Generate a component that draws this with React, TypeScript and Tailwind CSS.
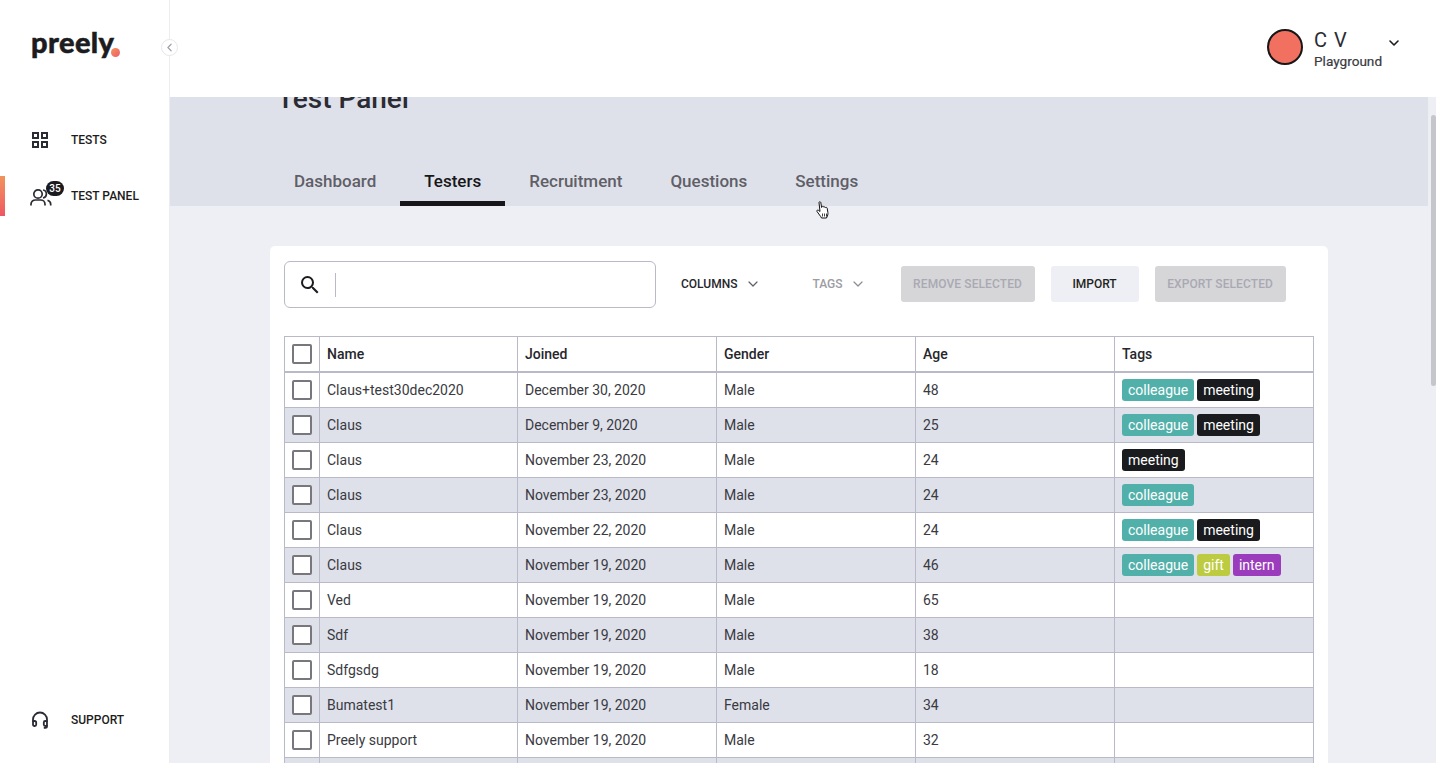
import { ChevronDown, ChevronLeft } from "lucide-react";

type Tag = "colleague" | "meeting" | "gift" | "intern";

const tagClass: Record<Tag, string> = {
  colleague: "bg-[#52b0aa]",
  meeting: "bg-[#1a1b1e]",
  gift: "bg-[#bccb3f]",
  intern: "bg-[#9b3cbd]",
};

const rows: { name: string; joined: string; gender: string; age: string; tags: Tag[] }[] = [
  { name: "Claus+test30dec2020", joined: "December 30, 2020", gender: "Male", age: "48", tags: ["colleague", "meeting"] },
  { name: "Claus", joined: "December 9, 2020", gender: "Male", age: "25", tags: ["colleague", "meeting"] },
  { name: "Claus", joined: "November 23, 2020", gender: "Male", age: "24", tags: ["meeting"] },
  { name: "Claus", joined: "November 23, 2020", gender: "Male", age: "24", tags: ["colleague"] },
  { name: "Claus", joined: "November 22, 2020", gender: "Male", age: "24", tags: ["colleague", "meeting"] },
  { name: "Claus", joined: "November 19, 2020", gender: "Male", age: "46", tags: ["colleague", "gift", "intern"] },
  { name: "Ved", joined: "November 19, 2020", gender: "Male", age: "65", tags: [] },
  { name: "Sdf", joined: "November 19, 2020", gender: "Male", age: "38", tags: [] },
  { name: "Sdfgsdg", joined: "November 19, 2020", gender: "Male", age: "18", tags: [] },
  { name: "Bumatest1", joined: "November 19, 2020", gender: "Female", age: "34", tags: [] },
  { name: "Preely support", joined: "November 19, 2020", gender: "Male", age: "32", tags: [] },
  { name: "", joined: "", gender: "", age: "", tags: [] },
];

function Box() {
  return <span className="block w-5 h-5 rounded-[2px] border-2 border-[#77777d] bg-white" />;
}

function Cell({ className, children }: { className: string; children?: React.ReactNode }) {
  return (
    <div className={`${className} flex items-center shrink-0 border-r border-[#b9b9c7] pl-[7px] h-full`}>{children}</div>
  );
}

function NavItem({ icon, label }: { icon: React.ReactNode; label: string }) {
  return (
    <div className="flex items-center h-10 pl-[30px]">
      <span className="relative w-[41px] h-6 flex items-center">{icon}</span>
      <span className="text-[12px] font-medium text-[#1c1c20] leading-none">{label}</span>
    </div>
  );
}

export default function App() {
  return (
    <div className="relative flex w-[1436px] h-[763px] overflow-hidden bg-[#eeeff4] text-[#2b2b33] font-['Roboto',sans-serif]">
      {/* Sidebar */}
      <aside className="relative flex flex-col shrink-0 w-[170px] h-full bg-white border-r border-[#ecedf1]">
        <div className="h-[120px] pl-[31px] pt-[22px]">
          <div className="flex items-end h-[40px]">
            <span className="font-['Lato',sans-serif] font-black text-[29px] leading-[40px] tracking-[0.4px] text-[#1b1b20] [-webkit-text-stroke:0.5px_#1b1b20]">preely</span>
            <span className="block w-[9px] h-[9px] rounded-full mb-[5px] -ml-[3px] bg-gradient-to-br from-[#f2935a] to-[#ee5a66]" />
          </div>
        </div>
        <div className="flex flex-col gap-4">
          <NavItem
            label="TESTS"
            icon={
              <svg width="16" height="16" viewBox="0 0 16 16" fill="none" stroke="#2b2b33" strokeWidth="2" className="ml-[2px]">
                <rect x="1" y="1" width="5" height="5" />
                <rect x="10" y="1" width="5" height="5" />
                <rect x="1" y="10" width="5" height="5" />
                <rect x="10" y="10" width="5" height="5" />
              </svg>
            }
          />
          <div className="relative">
            <span className="absolute left-0 top-0 w-[5px] h-10 bg-gradient-to-b from-[#f1935c] to-[#ee5561]" />
            <NavItem
              label="TEST PANEL"
              icon={
                <>
                  <svg width="22" height="20" viewBox="0 0 22 20" fill="none" stroke="#2b2b33" strokeWidth="1.7" className="mt-[1px]">
                    <circle cx="8" cy="7" r="4.2" />
                    <path d="M1 18.5v-1.2c0-2.6 2-4.3 4.4-4.3h5.2c2.4 0 4.4 1.700 4.4 4.3v1.2" />
                    <path d="M13 3c2 .3 3.4 2 3.4 4s-1.4 3.6-3.4 4" />
                    <path d="M17.500 13.300c1.900.5 3.200 2 3.200 4v1.200" />
                  </svg>
                  <span className="absolute left-[16px] -top-[3px] flex items-center justify-center w-[18px] h-[15px] rounded-full bg-[#1a1b1e] text-white text-[10px] font-medium leading-none">35</span>
                </>
              }
            />
          </div>
        </div>
        <div className="mt-auto mb-[23px]">
          <NavItem
            label="SUPPORT"
            icon={
              <svg width="18" height="18" viewBox="0 0 18 18" fill="none" stroke="#2b2b33" strokeWidth="1.8" className="ml-[1px]">
                <path d="M2 11V8.500a7 7 0 0 1 14 0V11" />
                <rect x="2" y="10" width="3.200" height="5" rx="1.400" />
                <rect x="12.800" y="10" width="3.200" height="5" rx="1.400" />
                <path d="M16 14v1.200c0 1-.8 1.600-1.800 1.600h-1.400" />
              </svg>
            }
          />
        </div>
        <span className="absolute left-[161px] top-[39px] flex items-center justify-center w-[17px] h-[17px] rounded-full bg-white border border-[#e6e7ec]">
          <ChevronLeft size={13} strokeWidth={2.2} color="#a0a1a9" />
        </span>
      </aside>

      <div className="flex flex-col flex-1 min-w-0">
        {/* Top bar */}
        <header className="flex items-center justify-end shrink-0 h-[97px] bg-white pr-[34px]">
          <span className="block w-9 h-9 mb-[4px] rounded-full bg-[#f1705f] border-2 border-[#17171a]" />
          <div className="ml-[11px] w-[72px] flex flex-col">
            <span className="text-[20px] leading-[24px] tracking-[1px] text-[#2b2b33]">C V</span>
            <span className="text-[13.6px] leading-[18px] text-[#3a3a42] [-webkit-text-stroke:0.2px_#3a3a42]">Playground</span>
          </div>
          <ChevronDown size={16} strokeWidth={2.4} color="#1b1b20" className="mb-[12px]" />
        </header>

        <div className="flex flex-1 min-h-0">
          <main className="flex-1 min-w-0 overflow-hidden">
            {/* Band */}
            <div className="h-[109px] bg-[#dfe1ea] overflow-hidden flex flex-col pl-[100px]">
              <h1 className="text-[28px] leading-[32px] -mt-[14px] font-medium text-[#2b2b33] ml-[7px]">Test Panel</h1>
              <nav className="mt-auto flex h-[45px] text-[17px] font-medium text-[#5f5f67]">
                <span className="px-6 pt-2">Dashboard</span>
                <span className="px-6 pt-2 text-[#17171a] border-b-[5px] border-[#17171a]">Testers</span>
                <span className="px-6 pt-2">Recruitment</span>
                <span className="px-6 pt-2">Questions</span>
                <span className="px-6 pt-2">Settings</span>
              </nav>
            </div>

            {/* Card */}
            <div className="pl-[100px] pt-10">
              <section className="w-[1058px] bg-white rounded-[5px] px-[14px] pt-[15px]">
                <div className="flex items-center h-[47px] text-[12px] font-medium">
                  <div className="flex items-center w-[372px] h-[47px] rounded-[6px] border border-[#b9b9c7] bg-white pl-[13px]">
                    <svg width="24" height="24" viewBox="0 0 24 24" fill="#1b1b20">
                      <path d="M15.500 14h-.79l-.28-.27A6.471 6.471 0 0 0 16 9.500 6.500 6.500 0 1 0 9.500 16c1.610 0 3.090-.59 4.230-1.570l.27.28v.79l5 4.990L20.490 19l-4.990-5zm-6 0C7.010 14 5 11.990 5 9.500S7.010 5 9.500 5 14 7.010 14 9.500 11.990 14 9.500 14z" />
                    </svg>
                    <span className="ml-[13px] w-px h-6 bg-[#b9b9c7]" />
                  </div>
                  <div className="flex items-center h-[47px] pb-[2px]">
                    <span className="ml-[25px] text-[#26262c]">COLUMNS</span>
                    <ChevronDown size={16} strokeWidth={1.8} color="#5f5f67" className="ml-[8px]" />
                    <span className="ml-[51px] text-[#9c9ca3]">TAGS</span>
                    <ChevronDown size={16} strokeWidth={1.8} color="#8c8c93" className="ml-[7px]" />
                    <span className="ml-[35px] flex items-center justify-center w-[134px] h-9 rounded-[3px] bg-[#d6d6d8] text-[#a9a9b3] tracking-[0.1px]">REMOVE SELECTED</span>
                    <span className="ml-4 flex items-center justify-center w-[88px] h-9 rounded-[3px] bg-[#eeeff4] text-[#1f1f24]">IMPORT</span>
                    <span className="ml-4 flex items-center justify-center w-[131px] h-9 rounded-[3px] bg-[#d6d6d8] text-[#a9a9b3] tracking-[0.1px]">EXPORT SELECTED</span>
                  </div>
                </div>

                <div className="mt-7 w-[1030px] border-l border-t border-[#b9b9c7] text-[14px]">
                  <div className="flex items-center h-[36px] border-b-2 border-[#b9b9c7] font-medium text-[#26262c]">
                    <Cell className="w-[35px]"><Box /></Cell>
                    <Cell className="w-[198px]">Name</Cell>
                    <Cell className="w-[199px]">Joined</Cell>
                    <Cell className="w-[199px]">Gender</Cell>
                    <Cell className="w-[199px]">Age</Cell>
                    <Cell className="w-[199px]">Tags</Cell>
                  </div>
                  {rows.map((r, i) => (
                    <div key={i} className={`flex items-center h-[35px] border-b border-[#b9b9c7] text-[#3a3a42] ${i % 2 ? "bg-[#dfe1ea]" : "bg-white"}`}>
                      <Cell className="w-[35px]"><Box /></Cell>
                      <Cell className="w-[198px]">{r.name}</Cell>
                      <Cell className="w-[199px]">{r.joined}</Cell>
                      <Cell className="w-[199px]">{r.gender}</Cell>
                      <Cell className="w-[199px]">{r.age}</Cell>
                      <Cell className="w-[199px] gap-[3px]">
                        {r.tags.map((t) => (
                          <span key={t} className={`${tagClass[t]} h-[22px] px-[6px] rounded-[3px] text-white flex items-center leading-none`}>{t}</span>
                        ))}
                      </Cell>
                    </div>
                  ))}
                </div>
              </section>
            </div>
          </main>
          {/* Scrollbar */}
          <div className="w-2 shrink-0 bg-[#eeeff4] pt-[18px] pl-[3px]">
            <div className="h-[271px] w-[5px] rounded-full bg-[#c4c6cb]" />
          </div>
        </div>
      </div>

      {/* Pointer cursor */}
      <svg className="absolute left-[815px] top-[201px]" width="16" height="19" viewBox="0 0 16 19" fill="#fff" stroke="#111" strokeWidth="1" strokeLinejoin="round">
        <path d="M4 1.500c0-1 1.600-1 1.800 0l.8 5 .6-1c.6-.6 1.300-.3 1.500.2l.2.6c.5-.6 1.400-.4 1.600.3.6-.5 1.500-.2 1.700.6l.7 4.300c.2 1.600-.2 3.200-1 4.500l-.4 1H6.500l-.7-1.300L2 10.500c-.6-1 .6-1.900 1.500-1.200l1.500 1.200z" />
        <path d="M7.500 12.500v3M9.500 12.500v3M11.500 12.500v3" fill="none" strokeWidth="0.8" />
      </svg>
    </div>
  );
}
